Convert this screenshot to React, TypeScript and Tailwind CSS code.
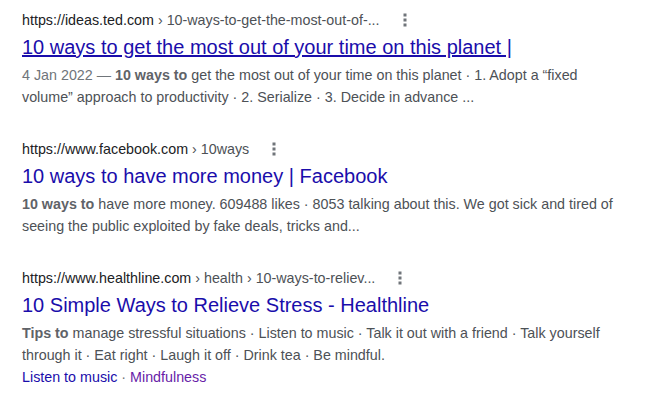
import React from 'react'

type Result = {
  site: string
  path: string
  title: string
  underline?: boolean
  snippet: React.ReactNode
  links?: { text: string; visited?: boolean }[]
}

function Dots() {
  return (
    <span className="ml-[18px] inline-flex w-[14px] justify-center">
      <svg width="4" height="14" viewBox="0 0 4 14" fill="#70757a">
        <rect x="0.5" y="0.5" width="3" height="3" />
        <rect x="0.5" y="5.5" width="3" height="3" />
        <rect x="0.5" y="10.5" width="3" height="3" />
      </svg>
    </span>
  )
}

const results: Result[] = [
  {
    site: 'https://ideas.ted.com',
    path: ' › 10-ways-to-get-the-most-out-of-...',
    title: '10 ways to get the most out of your time on this planet |',
    underline: true,
    snippet: (
      <>
        <span className="text-[#70757a]">4 Jan 2022 — </span>
        <b className="font-bold text-[#5f6368]">10 ways to</b> get the most out of your time on this planet · 1. Adopt a “fixed
        volume” approach to productivity · 2. Serialize · 3. Decide in advance ...
      </>
    ),
  },
  {
    site: 'https://www.facebook.com',
    path: ' › 10ways',
    title: '10 ways to have more money | Facebook',
    snippet: (
      <>
        <b className="font-bold text-[#5f6368]">10 ways to</b> have more money. 609488 likes · 8053 talking about this. We got sick and tired of
        seeing the public exploited by fake deals, tricks and...
      </>
    ),
  },
  {
    site: 'https://www.healthline.com',
    path: ' › health › 10-ways-to-reliev...',
    title: '10 Simple Ways to Relieve Stress - Healthline',
    snippet: (
      <>
        <b className="font-bold text-[#5f6368]">Tips to</b> manage stressful situations · Listen to music · Talk it out with a friend · Talk yourself
        through it · Eat right · Laugh it off · Drink tea · Be mindful.
      </>
    ),
    links: [{ text: 'Listen to music' }, { text: 'Mindfulness', visited: true }],
  },
]

export default function App() {
  return (
    <div className="min-h-screen bg-white pl-[22px] pt-[10px] font-['Liberation_Sans',Arial,sans-serif]">
      <div className="flex w-[600px] flex-col gap-[31px]">
        {results.map((r) => (
          <div key={r.site} className="flex flex-col">
            <div className="flex items-center text-[14.3px] leading-[20px]">
              <span className="text-[#202124]">{r.site}</span>
              <span className="whitespace-pre text-[#4d5156]">{r.path}</span>
              <Dots />
            </div>
            <a
              href="#"
              className={
                'mt-[4px] text-[20px] leading-[26px] text-[#1a0dab] ' + (r.underline ? 'underline' : 'no-underline')
              }
            >
              {r.title}
            </a>
            <div className="mt-[4px] text-[14.3px] leading-[22px] text-[#4d5156]">{r.snippet}</div>
            {r.links && (
              <div className="text-[14.3px] leading-[22px] text-[#4d5156]">
                {r.links.map((l, i) => (
                  <span key={l.text}>
                    {i > 0 && <span className="text-[#70757a]"> · </span>}
                    <a href="#" className={l.visited ? 'text-[#681da8]' : 'text-[#1a0dab]'}>
                      {l.text}
                    </a>
                  </span>
                ))}
              </div>
            )}
          </div>
        ))}
      </div>
    </div>
  )
}
